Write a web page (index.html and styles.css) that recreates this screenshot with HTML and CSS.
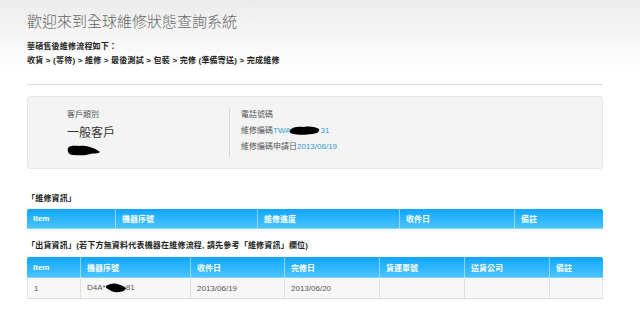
FILE: index.html
```html
<!DOCTYPE html>
<html lang="zh-Hant">
<head>
    <meta charset="UTF-8" />
    <title>全球維修狀態查詢系統</title>
    <link rel="stylesheet" href="styles.css">
</head>
<body>
    <div class="wrap">
        <h1 class="title">歡迎來到全球維修狀態查詢系統</h1>
        <div class="flow">
            <div>華碩售後維修流程如下：</div>
            <div>收貨 &gt; (等待) &gt; 維修 &gt; 最後測試 &gt; 包裝 &gt; 完修 (準備寄送) &gt; 完成維修</div>
        </div>
        <div class="rule"></div>

        <div class="panel">
            <div class="col-left">
                <div class="label">客戶類別</div>
                <div class="big">一般客戶</div>
                <svg class="blob-name" width="34" height="11" viewBox="0 0 34 11">
                    <path d="M1 3 C3 0 9 1 13 1 C18 0 22 2 26 3 C29 4 31 6 33 7 C31 9 27 8 23 9 C18 11 11 10 6 10 C2 10 0 7 1 3 Z" fill="#000"/>
                </svg>
            </div>
            <div class="col-right">
                <div class="label">電話號碼</div>
                <div class="label">維修編碼<span class="link">TWA</span><svg class="blob-inline" width="30" height="9" viewBox="0 0 30 9"><path d="M0 4 C2 1 8 0 14 1 C20 0 26 1 29 3 C30 6 27 8 22 8 C16 9 8 9 3 8 C0 7 -1 6 0 4 Z" fill="#000"/></svg><span class="link">31</span></div>
                <div class="label">維修編碼申請日<span class="link">2013/06/19</span></div>
            </div>
        </div>

        <div class="sect">「維修資訊」</div>
        <table class="grid repair">
            <colgroup>
                <col class="w88"><col class="w142"><col class="w142"><col class="w115"><col class="w89">
            </colgroup>
            <thead>
                <tr><th>Item</th><th>機器序號</th><th>維修進度</th><th>收件日</th><th>備註</th></tr>
            </thead>
        </table>

        <div class="sect ship-title">「出貨資訊」(若下方無資料代表機器在維修流程, 請先參考「維修資訊」欄位)</div>
        <table class="grid ship">
            <colgroup>
                <col class="w53"><col class="w110"><col class="w94"><col class="w95"><col class="w85"><col class="w85"><col class="w54">
            </colgroup>
            <thead>
                <tr><th>Item</th><th>機器序號</th><th>收件日</th><th>完修日</th><th>貨運單號</th><th>送貨公司</th><th>備註</th></tr>
            </thead>
            <tbody>
                <tr>
                    <td>1</td>
                    <td>D4A*<svg class="blob-inline" width="20" height="10" viewBox="0 0 20 10"><path d="M0 3 C3 1 7 0 11 1 C15 2 18 3 20 5 C19 8 16 9 12 9 C9 10 5 8 2 6 C0 5 -1 4 0 3 Z" fill="#000"/></svg>81</td>
                    <td>2013/06/19</td>
                    <td>2013/06/20</td>
                    <td></td>
                    <td></td>
                    <td></td>
                </tr>
            </tbody>
        </table>
    </div>
</body>
</html>
```

FILE: styles.css
```css
body {
    margin: 0;
    background: linear-gradient(#ececec, #ffffff 70px) no-repeat;
    font-family: 'Liberation Sans', 'Noto Sans CJK TC', sans-serif;
    color: #333;
    min-height: 318px;
}

.wrap {
    width: 576px;
    padding: 13px 0 0 27px;
}

.title {
    margin: 0;
    font-size: 15px;
    line-height: 18px;
    font-weight: 300;
    color: #666;
}

.flow {
    margin-top: 9px;
    font-size: 8px;
    line-height: 14px;
    font-weight: bold;
    letter-spacing: 0.2px;
    color: #222;
}

.rule {
    margin-top: 16px;
    height: 1px;
    background: #dcdcdc;
}

.panel {
    margin-top: 11px;
    display: flex;
    padding: 11px 0 11px 39px;
    background: #f4f4f4;
    border: 1px solid #e6e6e6;
    border-radius: 3px;
}

.col-left {
    width: 162px;
}
.col-right {
    border-left: 1px solid #d8d8d8;
    padding: 0 0 0 11px;
    height: 49px;
}
.col-right .label {
    line-height: 16px;
    margin-top: 0;
}
.col-right .label:first-child { margin-top: -1px; }

.label {
    font-size: 8px;
    line-height: 14px;
    color: #555;
}

.big {
    margin-top: 3px;
    font-size: 12px;
    line-height: 16px;
    color: #333;
}

.blob-name {
    display: block;
    margin-top: 4px;
}

.link { color: #3399dd; }

.blob-inline {
    vertical-align: middle;
}

.sect {
    margin-top: 23px;
    font-size: 8px;
    line-height: 14px;
    font-weight: bold;
    letter-spacing: 0.2px;
    color: #222;
}
.ship-title { margin-top: 10px; }

.grid {
    width: 576px;
    margin-top: 3px;
    border-collapse: separate;
    border-spacing: 0;
    table-layout: fixed;
    font-size: 8px;
}
.ship { margin-top: 4px; }

.w88 { width: 88px; }
.w142 { width: 142px; }
.w115 { width: 115px; }
.w89 { width: 89px; }
.w53 { width: 53px; }
.w110 { width: 110px; }
.w94 { width: 94px; }
.w95 { width: 95px; }
.w85 { width: 85px; }
.w54 { width: 54px; }

.grid th {
    height: 20px;
    padding: 0 6px;
    text-align: left;
    color: #fff;
    font-weight: bold;
    background: linear-gradient(#0ea6ff, #4cc3ff);
    border-left: 1px solid rgba(255, 255, 255, 0.45);
    border-bottom: 1px solid #7fd3ff;
}
.grid th:first-child {
    border-left: none;
    border-top-left-radius: 2px;
}
.grid th:last-child { border-top-right-radius: 2px; }
.repair th { height: 19px; }

.grid td {
    height: 20px;
    padding: 0 6px;
    color: #555;
    background: #f7f7f7;
    border-left: 1px solid #e0e0e0;
    border-bottom: 1px solid #dedede;
}
.grid td:first-child { border-left: 1px solid #e6e6e6; }
.grid td:last-child { border-right: 1px solid #e6e6e6; }
```
